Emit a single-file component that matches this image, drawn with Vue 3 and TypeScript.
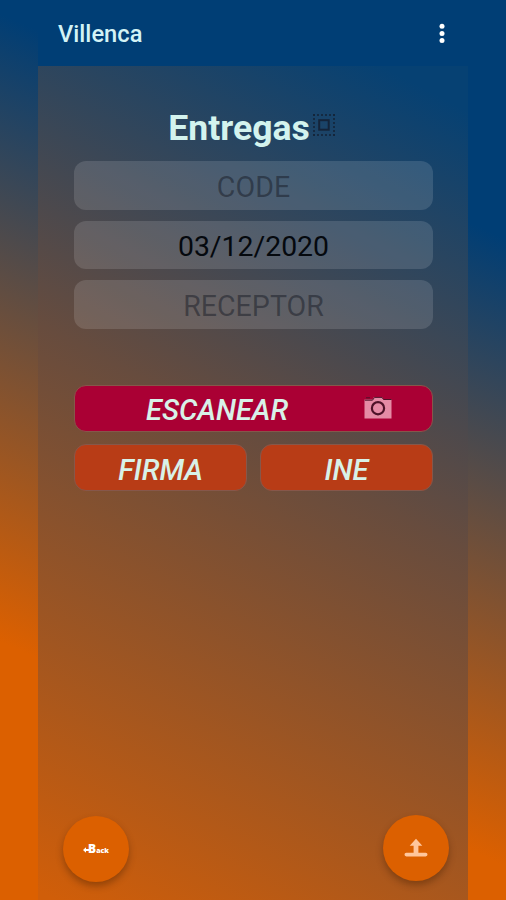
<script setup lang="ts">
import { ref } from 'vue'

const code = ref('')
const date = ref('03/12/2020')
const receptor = ref('')
const dots = [1, 5, 9, 13, 17, 21]
</script>

<template>
  <div class="page">
    <div class="device">
      <header class="bar">
        <span class="brand">Villenca</span>
        <button class="more" aria-label="Menu">
          <svg width="6" height="22" viewBox="0 0 6 22">
            <circle cx="3" cy="3.2" r="2.5" />
            <circle cx="3" cy="10.4" r="2.5" />
            <circle cx="3" cy="17.500" r="2.5" />
          </svg>
        </button>
      </header>
      <main class="body">
        <h1 class="title">
          <span>Entregas</span>
          <svg class="select" width="22" height="22" viewBox="0 0 22 22">
            <g v-for="p in dots" :key="p">
              <rect :x="p - 0.900" y="0.1" width="1.800" height="1.800" />
              <rect :x="p - 0.900" y="20.1" width="1.800" height="1.800" />
              <rect x="0.1" :y="p - 0.900" width="1.800" height="1.800" />
              <rect x="20.1" :y="p - 0.900" width="1.800" height="1.800" />
            </g>
            <rect class="inner" x="6.2" y="6.2" width="9.5" height="9.5" />
          </svg>
        </h1>
        <form class="fields" @submit.prevent>
          <input v-model="code" class="field" placeholder="CODE" />
          <input v-model="date" class="field date" />
          <input v-model="receptor" class="field" placeholder="RECEPTOR" />
        </form>
        <div class="actions">
          <button class="btn scan">
            <span>ESCANEAR</span>
            <svg class="camera" width="28" height="24" viewBox="0 0 28 24">
              <path class="case" d="M0.5 3.5h8l1.5-2.5h8l1.5 2.5h8V22.500H0.500z" />
              <path class="trim" d="M0.800 4.200h7.700L10.500 1.400h7.500l1.500 2.100h8M2 1.800h4" />
              <circle class="lens" cx="14" cy="12.200" r="6.100" />
            </svg>
          </button>
          <button class="btn">FIRMA</button>
          <button class="btn">INE</button>
        </div>
        <footer class="foot">
          <button class="fab back" aria-label="Back">
            <svg width="6" height="6" viewBox="0 0 6 6"><path d="M0 3L3 0.300V2h3v2H3v1.700z" /></svg>
            <span class="big">B</span><span class="small">ack</span>
          </button>
          <button class="fab upload" aria-label="Upload">
            <svg width="24" height="20" viewBox="0 0 24 20">
              <path d="M12 0.800l6.300 7h-3.900v7H21.700a1.500 1.500 0 0 1 0 3.600H2.300a1.500 1.500 0 0 1 0-3.600H9.600v-7H5.700z" />
            </svg>
          </button>
        </footer>
      </main>
    </div>
  </div>
</template>

<style>
body {
  margin: 0;
}
</style>

<style scoped>
.page {
  box-sizing: border-box;
  height: 900px;
  padding: 0 38px;
  overflow: hidden;
  background: linear-gradient(204deg, #003e75 218px, #dc6000 792px);
  font-family: Roboto, sans-serif;
}
button {
  border: 0;
  padding: 0;
  font-family: inherit;
  color: #d8f1e8;
}
.device {
  display: flex;
  flex-direction: column;
  height: 900px;
}
.bar {
  box-sizing: border-box;
  display: flex;
  align-items: center;
  justify-content: space-between;
  height: 66px;
  padding: 1px 23px 0 20px;
  background: #003e75;
}
.brand {
  color: #d3f3f5;
  font-size: 23.700px;
  font-weight: 500;
}
.more {
  display: flex;
  background: none;
}
.more svg {
  fill: #fff;
}
.body {
  box-sizing: border-box;
  display: flex;
  flex: 1;
  flex-direction: column;
  padding: 40px 35px 18px 36px;
  background: linear-gradient(208deg, #064173 40px, #674c3e 429px, #d05e09 930px);
}
.title {
  display: flex;
  justify-content: center;
  gap: 3px;
  height: 55px;
  margin: 0 4px 0 0;
  color: #d3f3ee;
  font-size: 35.600px;
  font-weight: 700;
  line-height: 44px;
}
.select {
  margin-top: 8px;
  fill: #14243a;
}
.inner {
  fill: none;
  stroke: #14243a;
  stroke-width: 2;
}
.fields {
  display: grid;
  gap: 11px;
}
.field {
  box-sizing: border-box;
  width: 100%;
  height: 48.500px;
  padding: 3px 0 0;
  border: 0;
  border-radius: 12px;
  outline: 0;
  background: rgba(255, 255, 255, 0.13);
  color: #05090e;
  font: 400 28.600px Roboto, sans-serif;
  text-align: center;
}
.date {
  font-size: 28.400px;
}
.field::placeholder {
  color: rgba(20, 24, 34, 0.48);
  opacity: 1;
}
.actions {
  display: grid;
  grid-template-columns: 1fr 1fr;
  gap: 12.500px;
  margin-top: 56px;
}
.btn {
  display: flex;
  align-items: center;
  justify-content: center;
  box-sizing: border-box;
  height: 47px;
  padding-top: 4px;
  border: 1px solid #86574a;
  border-radius: 12px;
  background: #b83c16;
  font-size: 29px;
  font-style: italic;
  font-weight: 500;
}
.scan {
  grid-column: 1 / -1;
  justify-content: flex-start;
  padding-left: 71px;
  background: #aa0034;
}
.camera {
  margin: -4px 0 0 76px;
}
.case {
  fill: #e58ba5;
}
.trim,
.lens {
  fill: none;
  stroke: #4e1228;
}
.trim {
  stroke-width: 1;
}
.lens {
  stroke-width: 2.200;
}
.foot {
  display: flex;
  justify-content: space-between;
  margin: auto -16px 0 -11px;
}
.fab {
  display: flex;
  align-items: center;
  justify-content: center;
  width: 66px;
  height: 66px;
  border-radius: 50%;
  background: #dc6000;
  box-shadow: 0 4px 7px rgba(60, 25, 0, 0.38);
  fill: #ffc69c;
}
.upload {
  margin-top: -1px;
}
.back {
  align-items: baseline;
  padding-top: 27px;
  box-sizing: border-box;
  color: #fff;
  fill: #fff;
  font-family: "Open Sans", sans-serif;
  font-weight: 800;
  line-height: 12px;
}
.back svg {
  margin: 0 -1px 2px 0;
}
.big {
  font-size: 12px;
}
.small {
  font-size: 7px;
}
</style>
